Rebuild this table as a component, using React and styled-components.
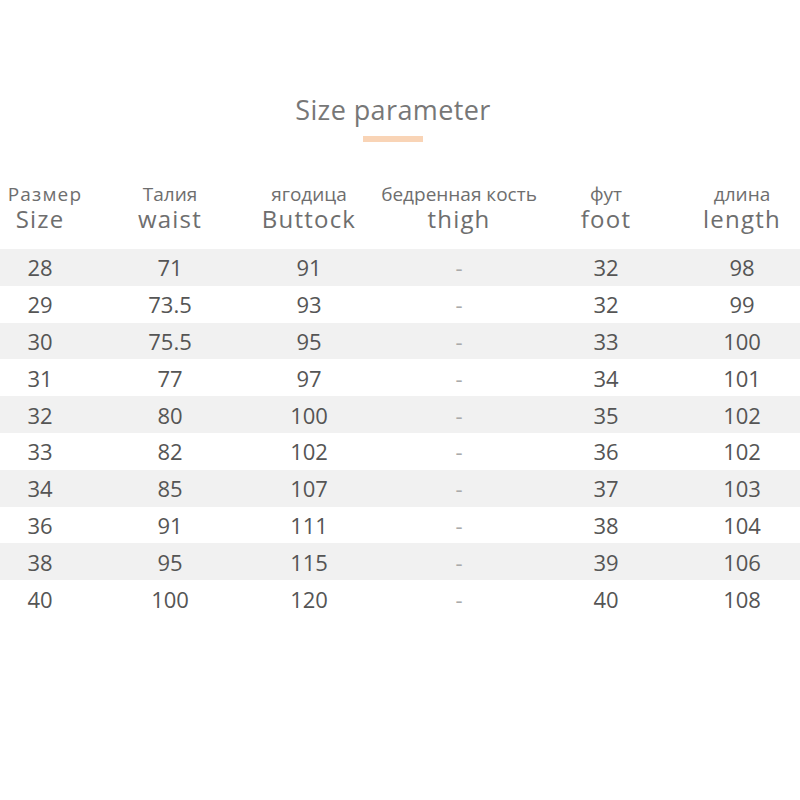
import React from 'react'
import styled, { createGlobalStyle } from 'styled-components'

const GlobalStyle = createGlobalStyle`
  body {
    margin: 0;
    background: #ffffff;
    font-family: "Open Sans", "Noto Sans", sans-serif;
    color: #666666;
    overflow: hidden;
  }
`

const Page = styled.div`
  width: 800px;
  height: 800px;
  padding-top: 94px;
  box-sizing: border-box;
`

const Heading = styled.div`
  width: 786px;
  display: flex;
  flex-direction: column;
  align-items: center;
`

const Title = styled.h1`
  margin: 0;
  font-size: 27px;
  line-height: 32px;
  font-weight: 400;
  color: #777777;
  letter-spacing: 0.4px;
`

const Bar = styled.div`
  width: 60px;
  height: 6px;
  background: #f9d4b6;
  margin-top: 10px;
`

const Grid = styled.div`
  display: grid;
  grid-template-columns: 80px 180px 98px 202px 92px 148px;
  align-items: center;
`

const HeaderRow = styled(Grid)`
  margin-top: 41px;
  margin-bottom: 16px;
`

const HeadCell = styled.div`
  display: flex;
  flex-direction: column;
  align-items: center;
  padding-left: ${p => p.$shift || 0}px;
`

const RuLabel = styled.span`
  font-size: 19px;
  line-height: 22px;
  color: #6e6e6e;
  white-space: nowrap;
  letter-spacing: ${p => (p.$wide ? '1.2px' : '0')};
  padding-left: ${p => (p.$wide ? '10px' : '0')};
`

const EnLabel = styled.span`
  font-size: 24px;
  line-height: 28px;
  letter-spacing: 1.2px;
  color: #6e6e6e;
  white-space: nowrap;
`

const Row = styled(Grid)`
  height: 36.8px;
  background: ${p => (p.$striped ? '#f1f1f1' : '#ffffff')};
`

const Cell = styled.div`
  text-align: center;
  font-size: 22px;
  line-height: 26px;
  color: ${p => (p.$muted ? '#aaaaaa' : '#555555')};
  padding-left: ${p => p.$shift || 0}px;
`

const headers = [
  ['Размер', 'Size'],
  ['Талия', 'waist'],
  ['ягодица', 'Buttock'],
  ['бедренная кость', 'thigh'],
  ['фут', 'foot'],
  ['длина', 'length']
]

const rows = [
  ['28', '71', '91', '-', '32', '98'],
  ['29', '73.5', '93', '-', '32', '99'],
  ['30', '75.5', '95', '-', '33', '100'],
  ['31', '77', '97', '-', '34', '101'],
  ['32', '80', '100', '-', '35', '102'],
  ['33', '82', '102', '-', '36', '102'],
  ['34', '85', '107', '-', '37', '103'],
  ['36', '91', '111', '-', '38', '104'],
  ['38', '95', '115', '-', '39', '106'],
  ['40', '100', '120', '-', '40', '108']
]

export default function App() {
  return (
    <Page>
      <GlobalStyle />
      <Heading>
        <Title>Size parameter</Title>
        <Bar />
      </Heading>
      <HeaderRow>
        {headers.map(([ru, en], i) => (
          <HeadCell key={en} $shift={i === 5 ? 32 : 0}>
            <RuLabel $wide={i === 0}>{ru}</RuLabel>
            <EnLabel>{en}</EnLabel>
          </HeadCell>
        ))}
      </HeaderRow>
      {rows.map((r, idx) => (
        <Row key={idx} $striped={idx % 2 === 0}>
          {r.map((v, i) => (
            <Cell key={i} $muted={v === '-'} $shift={i === 5 ? 32 : 0}>
              {v}
            </Cell>
          ))}
        </Row>
      ))}
    </Page>
  )
}
